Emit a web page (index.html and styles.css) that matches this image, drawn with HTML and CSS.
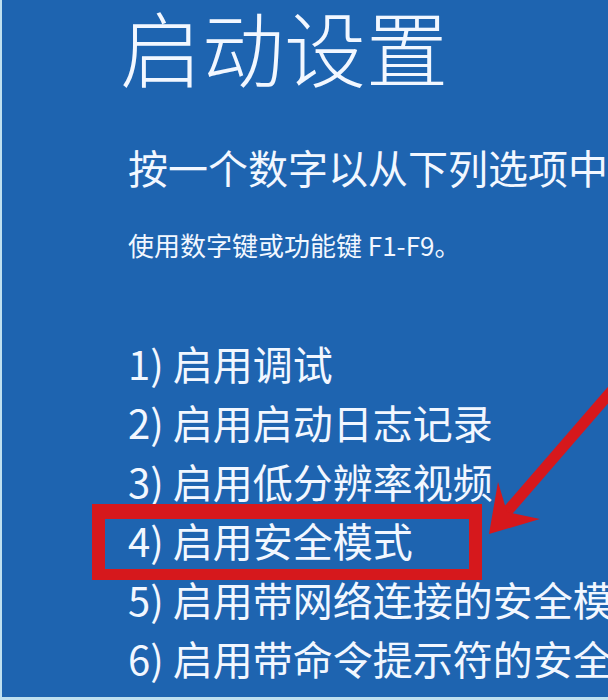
FILE: index.html
```html
<!DOCTYPE html>
<html lang="zh-CN">
<head>
<meta charset="utf-8">
<title>启动设置</title>
<link rel="stylesheet" href="styles.css">
</head>
<body>
<div class="screen">
  <h1 class="title">启动设置</h1>
  <p class="subtitle">按一个数字以从下列选项中选择：</p>
  <p class="hint">使用数字键或功能键 F1-F9。</p>
  <ol class="options">
    <li>1) 启用调试</li>
    <li>2) 启用启动日志记录</li>
    <li>3) 启用低分辨率视频</li>
    <li class="marked">4) 启用安全模式</li>
    <li>5) 启用带网络连接的安全模式</li>
    <li>6) 启用带命令提示符的安全模式</li>
  </ol>
  <svg class="arrow" width="608" height="700" viewBox="0 0 608 700" aria-hidden="true">
    <line x1="628" y1="372" x2="505" y2="514" stroke="#d6181c" stroke-width="11"/>
    <polygon points="489,534 498,482 507,512 540,519" fill="#d6181c"/>
  </svg>
</div>
</body>
</html>
```
FILE: styles.css
```css
html, body {
  margin: 0;
  padding: 0;
}
body {
  width: 608px;
  height: 700px;
  overflow: hidden;
  background: #bfe0f0;
}
.screen {
  position: relative;
  box-sizing: border-box;
  width: 606px;
  height: 697px;
  margin-left: 2px;
  background: #1e64b0;
  color: #f2f7ff;
  font-family: "Noto Sans CJK SC", "Noto Sans", sans-serif;
  padding-left: 126px;
  overflow: hidden;
  white-space: nowrap;
}
.title {
  margin: 0 0 0 -8px;
  padding-top: 5px;
  font-size: 82px;
  line-height: 82px;
  font-weight: 300;
}
.subtitle {
  margin: 60px 0 0 0;
  font-size: 40px;
  line-height: 40px;
  font-weight: 400;
}
.hint {
  margin: 45px 0 0 0;
  font-size: 26px;
  line-height: 26px;
}
.options {
  list-style: none;
  margin: 76px 0 0 0;
  padding: 0;
  font-size: 40px;
  line-height: 59px;
}
.options li {
  position: relative;
}
.marked::after {
  content: "";
  position: absolute;
  left: -36px;
  top: -7px;
  width: 364px;
  height: 50px;
  border: 13px solid #d6181c;
  border-top-width: 15px;
  border-bottom-width: 11px;
}
.arrow {
  position: absolute;
  left: -2px;
  top: 0;
}
```
